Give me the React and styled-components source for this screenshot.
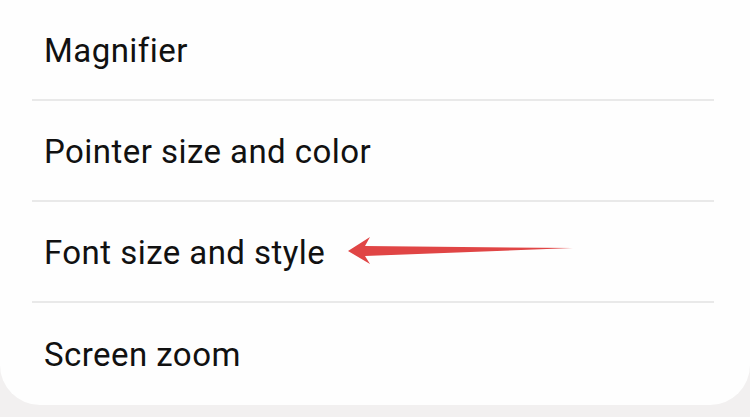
import React from 'react'
import styled, { createGlobalStyle } from 'styled-components'

const items = ['Magnifier', 'Pointer size and color', 'Font size and style', 'Screen zoom']

const GlobalStyle = createGlobalStyle`
	html, body {
		margin: 0;
		padding: 0;
		background: #f2f0f0;
		font-family: Roboto, "Noto Sans", sans-serif;
	}
`

const Page = styled.div`
	position: relative;
	width: 750px;
	height: 417px;
	overflow: hidden;
`

const Card = styled.div`
	width: 750px;
	height: 405px;
	background: #fefefe;
	border-radius: 0 0 40px 40px;
	display: flex;
	flex-direction: column;
`

const Row = styled.div`
	height: ${(p) => (p.last ? '102px' : '101px')};
	margin: 0 36px 0 32px;
	padding-left: 12px;
	display: flex;
	align-items: center;
	box-sizing: border-box;
	border-bottom: ${(p) => (p.last ? 'none' : '2px solid #e9e9e9')};
	padding-top: ${(p) => (p.last ? '0' : '1px')};
`

const Label = styled.span`
	font-size: 33px;
	color: #111111;
	letter-spacing: 0.45px;
`

const Arrow = styled.svg`
	position: absolute;
	left: 0;
	top: 0;
	pointer-events: none;
`

const App = () => {
	return (
		<Page>
			<GlobalStyle />
			<Card>
				{items.map((item, i) => (
					<Row key={item} last={i === items.length - 1}>
						<Label>{item}</Label>
					</Row>
				))}
			</Card>
			<Arrow width="750" height="417" viewBox="0 0 750 417">
				<polygon
					points="348,251 370,237 365,246 573,248 365,256 370,264"
					fill="#e04545"
				/>
			</Arrow>
		</Page>
	)
}

export default App
